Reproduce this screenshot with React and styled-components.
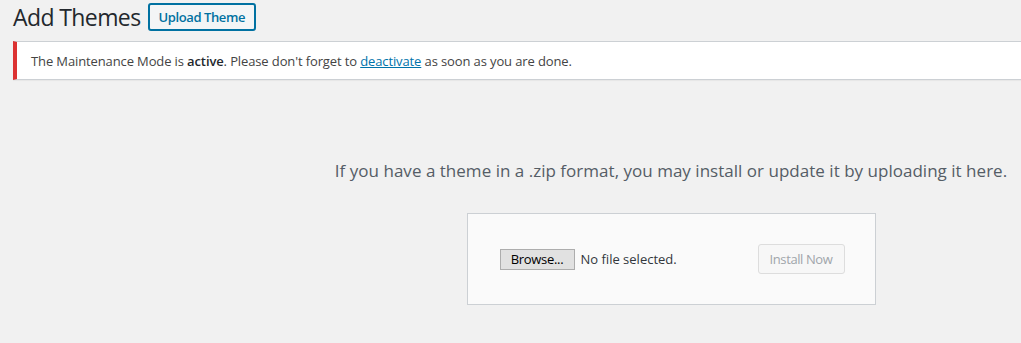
import React from 'react'
import styled, { createGlobalStyle } from 'styled-components'

const GlobalStyle = createGlobalStyle`
  html, body {
    margin: 0;
    padding: 0;
    background: #f1f1f1;
    font-family: "Open Sans", "Noto Sans", sans-serif;
    color: #23282d;
  }
`

export default function App() {
  return (
    <>
      <GlobalStyle />
      <Wrap>
        <HeaderRow>
          <Title>Add Themes</Title>
          <TitleAction>Upload Theme</TitleAction>
        </HeaderRow>

        <Notice>
          The Maintenance Mode is <strong>active</strong>. Please don't forget to{' '}
          <a href="#">deactivate</a> as soon as you are done.
        </Notice>

        <UploadArea>
          <Help>If you have a theme in a .zip format, you may install or update it by uploading it here.</Help>
          <UploadForm>
            <FilePicker>
              <BrowseButton>Browse...</BrowseButton>
              <FileName>No file selected.</FileName>
            </FilePicker>
            <InstallButton disabled>Install Now</InstallButton>
          </UploadForm>
        </UploadArea>
      </Wrap>
    </>
  )
}

const Wrap = styled.div`
  padding-left: 13px;
`

const HeaderRow = styled.div`
  display: flex;
  align-items: center;
  gap: 7px;
  padding-top: 3px;
`

const Title = styled.h1`
  margin: 0;
  font-size: 23px;
  font-weight: 400;
  line-height: 28px;
  letter-spacing: -0.6px;
  color: #23282d;
`

const TitleAction = styled.button`
  height: 28px;
  padding: 0 9px;
  border: 2px solid #0071a1;
  border-radius: 3px;
  background: #f3f5f6;
  color: #0071a1;
  font-family: inherit;
  font-size: 13px;
  font-weight: 600;
  letter-spacing: -0.4px;
  cursor: pointer;
`

const Notice = styled.div`
  margin-top: 10px;
  padding: 10px 12px 8px 14px;
  background: #fff;
  border: 1px solid #ccd0d4;
  border-left: 4px solid #dc3232;
  border-right: none;
  box-shadow: 0 1px 1px rgba(0, 0, 0, 0.04);
  font-size: 13px;
  line-height: 19px;
  letter-spacing: -0.12px;
  color: #444;

  strong {
    font-weight: 600;
    color: #23282d;
  }

  a {
    color: #0073aa;
    text-decoration: underline;
  }
`

const UploadArea = styled.div`
  display: flex;
  flex-direction: column;
  align-items: center;
  margin-left: 308px;
  padding-top: 79px;
`

const Help = styled.p`
  margin: 0;
  font-size: 17px;
  line-height: 24px;
  letter-spacing: 0.02px;
  color: #555d66;
  white-space: nowrap;
`

const UploadForm = styled.div`
  box-sizing: border-box;
  width: 409px;
  height: 92px;
  margin-top: 30px;
  padding: 0 30px 0 32px;
  display: flex;
  align-items: center;
  justify-content: space-between;
  background: #fafafa;
  border: 1px solid #ccd0d4;
`

const FilePicker = styled.div`
  display: flex;
  align-items: center;
  gap: 6px;
`

const BrowseButton = styled.button`
  box-sizing: border-box;
  width: 75px;
  height: 21px;
  padding: 0;
  border: 1px solid #adadad;
  border-radius: 0;
  background: #e1e1e1;
  color: #000;
  font-family: inherit;
  font-size: 13px;
  letter-spacing: -0.3px;
`

const FileName = styled.span`
  font-size: 13px;
  letter-spacing: 0;
  color: #32373c;
`

const InstallButton = styled.button`
  box-sizing: border-box;
  width: 87px;
  height: 30px;
  padding: 0;
  border: 1px solid #ddd;
  border-radius: 3px;
  background: #f7f7f7;
  color: #a0a5aa;
  font-family: inherit;
  font-size: 13px;
  letter-spacing: -0.4px;
`
